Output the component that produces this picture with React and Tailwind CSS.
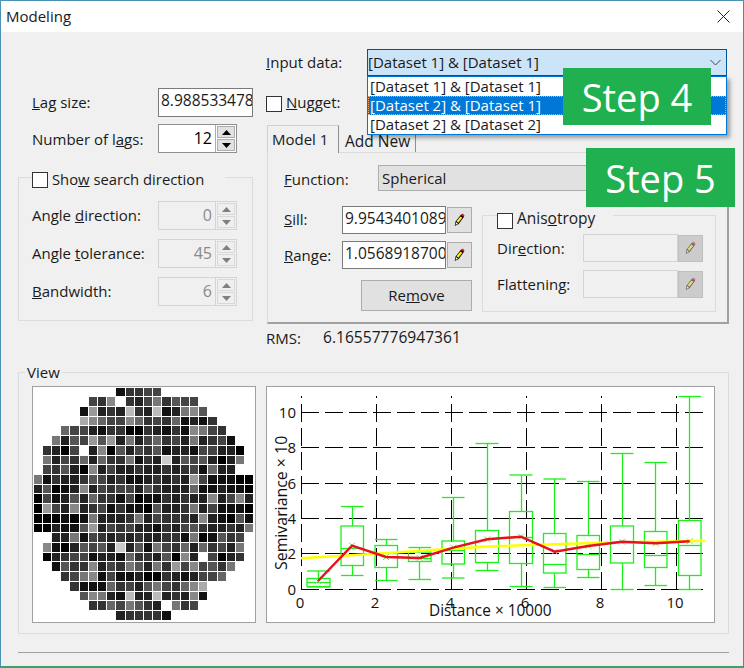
import React from 'react';

const WAFER = [
  '.........13344..........',
  '......438.32473544......',
  '.....19232b32b12785.....',
  '.....a86448634361213....',
  '...644213300321318743...',
  '..72549592724634272341..',
  '.3204.28052435122144220.',
  '.7243626337132c25452027.',
  '.435208242232232341622..',
  '713223542311232329411100',
  '250128243442532226112110',
  '041252633140113232282482',
  '094282341311052237241110',
  '000101722237243332821051',
  '002115924342213245322327',
  '..227143232322331701534.',
  '.81025452c2517436263427.',
  '.02344122163325082.4023.',
  '..15338243752739484537..',
  '...347814112003212446...',
  '....31116342574368a.....',
  '.....58721b22b23281.....',
  '......33647532.734......',
  '.........233331.........',
];

const BOXES = [
  [307, 330, 571, 578.5, 586.5, 582.5, 587],
  [341, 363.5, 506.5, 526, 565.5, 548.5, 575.5],
  [375, 397.5, 539.5, 545.5, 567.5, 553.5, 580.5],
  [408.5, 431, 547.5, 552, 561.5, 558.5, 579.5],
  [442, 464.5, 497.5, 541, 564, 550.5, 578],
  [475.5, 498.5, 443.5, 530.5, 562.5, 546.5, 570.5],
  [509.5, 532.5, 475, 511.5, 563.5, 537.5, 586.5],
  [543.5, 566, 479, 533.5, 573, 564.5, 587.5],
  [577, 599.5, 481.5, 535.5, 569.5, 554.5, 577.5],
  [610.5, 633.5, 453.5, 526, 563, 542.5, 589.5],
  [644.5, 667, 462.5, 531.5, 567.5, 555.5, 585.5],
  [678.5, 701, 396.5, 520.5, 575.5, 545.5, 589.5],
];

const RED = '318,581 352,545.7 386,557 419.7,558 453.3,547.7 487.3,539.3 521,536.7 554.7,551.7 588.3,546 622,541.7 655.7,543.3 689.7,541.3';
const YELLOW = '301,558.3 376,553.7 451,548.7 500,546 600,542.7 705,540.7';

function Wafer() {
  return (
    <svg width="222" height="235" viewBox="33 387 222 235" className="block">
      {WAFER.map((row, j) =>
        row.split('').map((ch, i) => {
          if (ch === '.') return null;
          const v = parseInt(ch, 16) * 17;
          const x = Math.floor(i * 9.2);
          const y = Math.floor(j * 9.72);
          const w = Math.floor((i + 1) * 9.2) - x - 1;
          const h = Math.floor((j + 1) * 9.72) - y - 1;
          return <rect key={i + '-' + j} x={34 + x} y={388 + y} width={w} height={h} fill={`rgb(${v},${v},${v})`} shapeRendering="crispEdges" />;
        })
      )}
    </svg>
  );
}

function Chart() {
  const xs = [301.5, 376.5, 451.5, 526.5, 601.5, 676.5];
  const ys = [412.5, 447.5, 483.5, 518.5, 553.5, 589.5];
  const yl = ['10', '8', '6', '4', '2', '0'];
  const xl = ['0', '2', '4', '6', '8', '10'];
  return (
    <svg width="447" height="235" viewBox="267 387 447 235" className="block">
      {xs.map((x) => (
        <line key={x} x1={x} y1="589.5" x2={x} y2="396" stroke="#000" strokeDasharray="18 6" shapeRendering="crispEdges" />
      ))}
      {ys.map((y) => (
        <line key={y} x1="301" y1={y} x2="703" y2={y} stroke="#000" strokeDasharray="18 6" shapeRendering="crispEdges" />
      ))}
      {BOXES.map(([a, b, t, bt, bb, m, c], i) => {
        const cx = Math.floor((a + b) / 2) + 0.5;
        return (
          <g key={i} stroke="#1cf01c" strokeWidth="1.3" fill="none">
            <line x1={a} y1={t} x2={b} y2={t} />
            <line x1={cx} y1={t} x2={cx} y2={bt} />
            <rect x={a} y={bt} width={b - a} height={bb - bt} />
            <line x1={a} y1={m} x2={b} y2={m} />
            <line x1={cx} y1={bb} x2={cx} y2={c} />
            <line x1={a} y1={c} x2={b} y2={c} />
          </g>
        );
      })}
      {RED.split(' ').map((p, i) => {
        const [x, y] = p.split(',').map(Number);
        return <path key={i} d={`M${x - 3} ${y - 3}L${x + 3} ${y + 3}M${x + 3} ${y - 3}L${x - 3} ${y + 3}`} stroke="#66ee66" fill="none" />;
      })}
      <polyline points={YELLOW} fill="none" stroke="#ffff00" strokeWidth="2.4" />
      <polyline points={RED} fill="none" stroke="#e8101c" strokeWidth="2.4" />
      <g fontFamily="'Open Sans', sans-serif" fontSize="15" fill="#111">
        {yl.map((t, i) => (
          <text key={t} x="296" y={ys[i] + 5} textAnchor="end">{t}</text>
        ))}
        {xl.map((t, i) => (
          <text key={t} x={xs[i] - 1.5} y="608" textAnchor="middle">{t}</text>
        ))}
        <text x="429" y="615.5" fontSize="15.4">Distance × 10000</text>
        <text x="287" y="570" fontSize="15.9" transform="rotate(-90 287 570)">Semivariance × 10</text>
      </g>
    </svg>
  );
}

function Pencil({ disabled }) {
  return (
    <svg width="11" height="14" viewBox="0 0 14 17" className={disabled ? 'opacity-50' : ''}>
      <path d="M1 16 L2 10.5 L9 1.5 L13 4 L6 13.5 Z" fill="#000" />
      <path d="M2 15 L2.8 11.5 L5 13 Z" fill="#fff" />
      <path d="M3.2 10.2 L8.2 4 L10.6 5.6 L5.6 12 Z" fill="#ffe81a" />
      <path d="M9.5 1 L11.5 0.5 L13.5 3 L12 4.5 L9.3 2.8 Z" fill="#e0101c" />
    </svg>
  );
}

function PencilBtn({ disabled, className }) {
  return (
    <div className={`flex items-center justify-center border ${disabled ? 'bg-[#cccccc] border-[#bfbfbf]' : 'bg-[#e1e1e1] border-[#adadad]'} ${className}`}>
      <Pencil disabled={disabled} />
    </div>
  );
}

function Arrow({ up, disabled }) {
  return (
    <svg width="9" height="5" viewBox="0 0 9 5">
      <path d={up ? 'M4.5 0 L9 5 L0 5 Z' : 'M0 0 L9 0 L4.5 5 Z'} fill={disabled ? '#808080' : '#000'} />
    </svg>
  );
}

function Spin({ value, disabled }) {
  const btn = `flex-1 flex items-center justify-center border ${disabled ? 'border-[#d9d9d9] bg-[#efefef]' : 'border-[#adadad] bg-[#e1e1e1]'}`;
  return (
    <div className={`w-[79px] h-[29px] flex border ${disabled ? 'border-[#d4d4d4] bg-[#f0f0f0]' : 'border-[#8f8f8f] bg-white'}`}>
      <div className={`flex-1 flex items-center justify-end pr-[3px] text-[16px] pb-[2px] ${disabled ? 'text-[#8a8a8a]' : 'text-black'}`}>{value}</div>
      <div className={`w-[21px] flex flex-col gap-px p-px border-l ${disabled ? 'border-[#d4d4d4]' : 'border-[#adadad]'}`}>
        <div className={btn}><Arrow up disabled={disabled} /></div>
        <div className={btn}><Arrow disabled={disabled} /></div>
      </div>
    </div>
  );
}

function Check() {
  return <div className="w-4 h-4 shrink-0 bg-white border border-[#333333]" />;
}

function SpinRow({ label, value, disabled, className = '' }) {
  return (
    <div className={`flex items-center h-[29px] ${className}`}>
      <div className="w-[126px] shrink-0">{label}</div>
      <Spin value={value} disabled={disabled} />
    </div>
  );
}

function TextBox({ value, className }) {
  return (
    <div className={`flex items-center overflow-hidden whitespace-nowrap border border-[#7a7a7a] bg-white pl-[2px] text-[15.5px] pb-[2px] ${className}`}>
      <span className="overflow-hidden w-full">{value}</span>
    </div>
  );
}

function App() {
  return (
    <div className="relative w-[744px] h-[668px] overflow-hidden bg-[#f0f0f0] border border-t-[#4a93b4] border-l-[#4a93b4] border-r-[#3f9f6a] border-b-[#3f9f6a] border-b-2 font-['Open_Sans',sans-serif] text-[15px] leading-none text-[#1a1a1a]">
      <div className="h-[31px] bg-white flex items-center justify-between pl-[5px] pr-[13px]">
        <span>Modeling</span>
        <svg width="13" height="13" viewBox="0 0 13 13">
          <path d="M0.5 0.5 L12.5 12.5 M12.5 0.5 L0.5 12.5" stroke="#222" strokeWidth="1" fill="none" />
        </svg>
      </div>

      <div className="flex h-[340px]">
        <div className="w-[265px] shrink-0 pl-[17px]">
          <div className="flex items-center h-[28px] mt-[56px] pl-[14px]">
            <div className="w-[126px] shrink-0"><u>L</u>ag size:</div>
            <TextBox value="8.988533478012" className="w-[95px] h-[29px]" />
          </div>
          <SpinRow className="mt-[8px] pl-[14px]" value="12" label={<span className="block pt-[2px]">Number of l<u>a</u>gs:</span>} />
          <div className="relative mt-[24px] w-[235px] h-[144px] border border-[#dcdcdc] pt-[23px] pl-[13px]">
            <div className="absolute left-[13px] -top-[6px] flex items-center gap-[4px] bg-[#f0f0f0] pr-[21px]">
              <Check />
              <span className="pb-[2px] text-[14.8px]">Sho<u>w</u> search direction</span>
            </div>
            <SpinRow disabled value="0" label={<>Angle <u>d</u>irection:</>} />
            <SpinRow disabled className="mt-[9px]" value="45" label={<>Angle <u>t</u>olerance:</>} />
            <SpinRow disabled className="mt-[9px]" value="6" label={<><u>B</u>andwidth:</>} />
          </div>
        </div>

        <div className="flex-1">
          <div className="flex items-center h-[27px] mt-[17px]">
            <div className="w-[101px]"><u>I</u>nput data:</div>
            <div className="w-[360px] h-[27px] bg-[#cce4f7] border border-[#005499] flex items-center justify-between pr-[5px]">
              <span>[Dataset 1] &amp; [Dataset 1]</span>
              <svg width="11" height="7" viewBox="0 0 11 7"><path d="M0.5 1 L5.5 6 L10.5 1" stroke="#444" fill="none" /></svg>
            </div>
          </div>
          <div className="flex items-center gap-[4px] mt-[20px] h-[16px]">
            <Check />
            <span className="pb-[3px]"><u>N</u>ugget:</span>
          </div>
          <div className="flex items-end h-[27px] mt-[13px] pl-px">
            <div className="relative z-10 w-[72px] h-[28px] -mb-px bg-[#f0f0f0] border border-b-0 border-[#d0d0d0] border-r-[#8f8f8f] flex items-center pl-[4px]">Model 1</div>
            <div className="w-[77px] h-[26px] pl-[6px] pt-[8px] border-r border-[#8f8f8f] text-[15.5px]">Add New</div>
          </div>
          <div className="ml-px w-[462px] h-[172px] border border-[#dcdcdc] border-r-2 border-b-2 border-r-[#a0a0a0] border-b-[#a0a0a0]">
            <div className="flex items-center h-[26px] mt-[12px] pl-[16px]">
              <div className="w-[94px] shrink-0 pt-[2px]"><u>F</u>unction:</div>
              <div className="w-[338px] h-[26px] bg-[#e1e1e1] border border-[#adadad] flex items-center pl-[3px]">Spherical</div>
            </div>
            <div className="flex mt-[15px] pl-[16px]">
              <div className="w-[188px] shrink-0">
                <div className="flex items-center h-[28px]">
                  <div className="w-[58px] shrink-0 pb-[2px]"><u>S</u>ill:</div>
                  <TextBox value="9.954340108993" className="w-[104px] h-[28px]" />
                  <PencilBtn className="ml-[1px] w-[25px] h-[26px]" />
                </div>
                <div className="flex items-center h-[28px] mt-[7px]">
                  <div className="w-[58px] shrink-0"><u>R</u>ange:</div>
                  <TextBox value="1.056891870066" className="w-[104px] h-[28px]" />
                  <PencilBtn className="ml-[1px] w-[25px] h-[26px]" />
                </div>
                <div className="ml-[77px] mt-[11px] w-[111px] h-[31px] bg-[#e1e1e1] border border-[#adadad] flex items-center justify-center">Re<u>m</u>ove</div>
              </div>
              <div className="relative ml-[10px] mt-[9px] w-[234px] h-[97px] border border-[#dcdcdc] pl-[14px] pt-[18px]">
                <div className="absolute left-[14px] -top-[5px] flex items-center gap-[4px] bg-[#f0f0f0] pr-[18px]">
                  <Check />
                  <span className="pb-[4px] text-[15.5px]">Anis<u>o</u>tropy</span>
                </div>
                <div className="flex items-center h-[28px]">
                  <div className="w-[86px] shrink-0">Dir<u>e</u>ction:</div>
                  <div className="w-[95px] h-[28px] border border-[#d4d4d4]" />
                  <PencilBtn disabled className="w-[25px] h-[27px]" />
                </div>
                <div className="flex items-center h-[28px] mt-[8px]">
                  <div className="w-[86px] shrink-0">Flattenin<u>g</u>:</div>
                  <div className="w-[95px] h-[28px] border border-[#d4d4d4]" />
                  <PencilBtn disabled className="w-[25px] h-[27px]" />
                </div>
              </div>
            </div>
          </div>
          <div className="flex items-center h-[16px] mt-[6px]">
            <div className="w-[57px]">RMS:</div>
            <div className="text-[15.6px]">6.16557776947361</div>
          </div>
        </div>
      </div>

      <div className="relative ml-[17px] w-[711px] h-[262px] border border-[#dcdcdc] pt-[13px] pl-[13px] flex">
        <div className="absolute left-[6px] -top-[8px] bg-[#f0f0f0] px-[2px]">View</div>
        <div className="w-[224px] h-[237px] bg-white border border-[#a0a0a0]"><Wafer /></div>
        <div className="ml-[10px] w-[449px] h-[237px] bg-white border border-[#a0a0a0]"><Chart /></div>
      </div>
      <div className="ml-[17px] mt-[18px] w-[711px] h-px bg-[#a0a0a0]" />

      <div className="absolute left-[366px] top-[75px] w-[360px] h-[59px] bg-white border border-[#0078d7] shadow-[3px_3px_4px_rgba(0,0,0,0.35)] flex flex-col">
        <div className="h-[19px] flex items-center pl-[2px]">[Dataset 1] &amp; [Dataset 1]</div>
        <div className="h-[19px] flex items-center pl-[1px] bg-[#0078d7] text-white border border-dotted border-[#f5a35c]">[Dataset 2] &amp; [Dataset 1]</div>
        <div className="h-[19px] flex items-center pl-[2px]">[Dataset 2] &amp; [Dataset 2]</div>
      </div>
      <div className="absolute left-[562px] top-[67px] w-[148px] h-[57px] bg-[#21b04f] text-white text-[38px] flex items-center justify-center">Step 4</div>
      <div className="absolute left-[585px] top-[147px] w-[149px] h-[59px] bg-[#21b04f] text-white text-[38px] flex items-center justify-center">Step 5</div>
    </div>
  );
}

export default App;
